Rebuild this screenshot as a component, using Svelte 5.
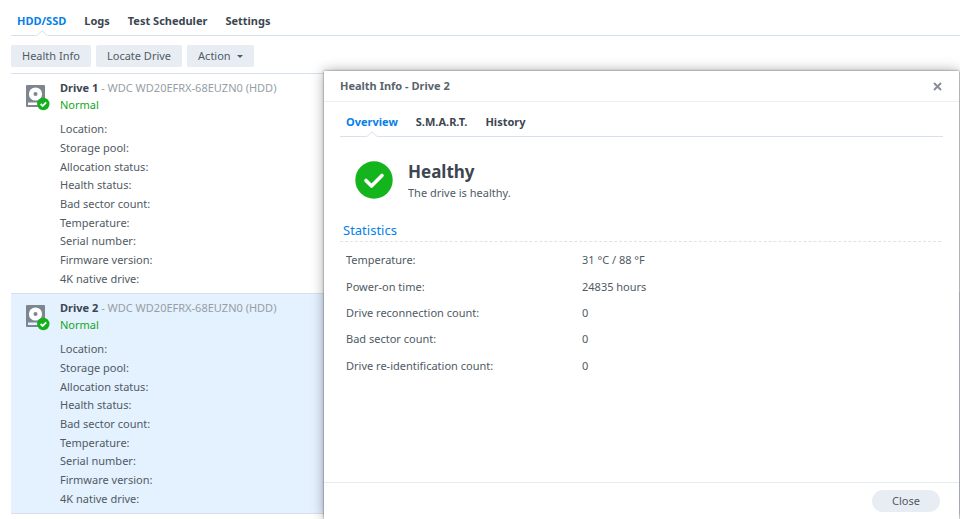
<script>
  let drives = [
    { id: 1, model: 'WDC WD20EFRX-68EUZN0 (HDD)', status: 'Normal' },
    { id: 2, model: 'WDC WD20EFRX-68EUZN0 (HDD)', status: 'Normal' }
  ];
  let fields = [
    'Location', 'Storage pool', 'Allocation status', 'Health status', 'Bad sector count',
    'Temperature', 'Serial number', 'Firmware version', '4K native drive'
  ];
  let tabs = ['HDD/SSD', 'Logs', 'Test Scheduler', 'Settings'];
  let dialogTabs = ['Overview', 'S.M.A.R.T.', 'History'];
  let stats = [
    ['Temperature', '31 °C / 88 °F'],
    ['Power-on time', '24835 hours'],
    ['Drive reconnection count', '0'],
    ['Bad sector count', '0'],
    ['Drive re-identification count', '0']
  ];
  let tab = $state('HDD/SSD');
  let dialogTab = $state('Overview');
  let selected = $state(2);
  let open = $state(true);
</script>

{#snippet tabBar(items, current, pick)}
  <nav class="tabs">
    {#each items as item}
      <button class="tab" class:active={item === current} onclick={() => pick(item)}>
        {item}
        {#if item === current}
          <svg class="notch" width="12" height="6" viewBox="0 0 12 6">
            <path d="M0 6V5.5L1 5.5L6 .8L11 5.5H12V6Z" fill="#fff" />
            <path d="M1 5.5L6 .8L11 5.5" fill="none" stroke="#d7e1eb" />
          </svg>
        {/if}
      </button>
    {/each}
  </nav>
{/snippet}

<main class="page">
  {@render tabBar(tabs, tab, (t) => (tab = t))}

  <div class="toolbar">
    <button class="btn" onclick={() => (open = true)}>Health Info</button>
    <button class="btn">Locate Drive</button>
    <button class="btn">
      Action
      <svg width="6" height="3" viewBox="0 0 6 3"><path d="M0 0H6L3 3Z" fill="#505a64" /></svg>
    </button>
  </div>

  <ul class="drives">
    {#each drives as drive}
      <li class="drive" class:selected={drive.id === selected}>
        <svg class="drive-icon" width="25" height="26" viewBox="0 0 25 26">
          <path
            fill="#7d868f"
            fill-rule="evenodd"
            d="M1 0H18Q19 0 19 1V21Q19 22 18 22H1Q0 22 0 21V1Q0 0 1 0ZM2 17.5V20H17V17.5Z"
          />
          <circle cx="9.5" cy="9" r="6.6" fill="#fff" />
          <circle cx="9.5" cy="9" r="2" fill="#7d868f" />
          <circle cx="17.3" cy="19" r="6.2" fill="#12b01a" />
          <path d="M14.6 19L16.6 21L20.2 17.3" fill="none" stroke="#fff" stroke-width="1.8" />
        </svg>
        <div class="info">
          <div class="name"><strong>Drive {drive.id}</strong> - {drive.model}</div>
          <div class="status">{drive.status}</div>
          <div class="fields">
            {#each fields as field}
              <span>{field}:</span>
            {/each}
          </div>
        </div>
      </li>
    {/each}
  </ul>

  {#if open}
    <section class="dialog" role="dialog" aria-labelledby="dialog-title">
      <header>
        <h1 id="dialog-title">Health Info - Drive {selected}</h1>
        <button class="x" aria-label="Close window" onclick={() => (open = false)}>
          <svg width="9" height="9" viewBox="0 0 9 9">
            <path d="M1 1L8 8M8 1L1 8" fill="none" stroke="#878f97" stroke-width="2" />
          </svg>
        </button>
      </header>

      <div class="content">
        {@render tabBar(dialogTabs, dialogTab, (t) => (dialogTab = t))}

        <div class="health">
          <svg width="38" height="38" viewBox="0 0 38 38">
            <circle cx="19" cy="19" r="18.7" fill="#14b41c" />
            <path
              d="M11 19.5L16.5 25L27 14.5"
              fill="none"
              stroke="#fff"
              stroke-width="3.6"
              stroke-linecap="round"
              stroke-linejoin="round"
            />
          </svg>
          <div>
            <h2>Healthy</h2>
            <p>The drive is healthy.</p>
          </div>
        </div>

        <h3>Statistics</h3>
        <table>
          <tbody>
            {#each stats as [label, value]}
              <tr>
                <th scope="row">{label}:</th>
                <td>{value}</td>
              </tr>
            {/each}
          </tbody>
        </table>
      </div>

      <footer>
        <button class="close" onclick={() => (open = false)}>Close</button>
      </footer>
    </section>
  {/if}
</main>

<style>
  .page {
    position: relative;
    box-sizing: border-box;
    height: 100vh;
    overflow: hidden;
    padding: 5px 0 0 11px;
    background: #fff;
    color: #505a64;
    font: 11px/16px Verdana, "Noto Sans", sans-serif;
  }

  button {
    font: inherit;
    color: inherit;
    border: none;
    cursor: pointer;
  }

  .tabs {
    display: flex;
    gap: 18px;
    height: 30px;
    padding: 0 6px;
    border-bottom: 1px solid #d7e1eb;
  }

  .tab {
    position: relative;
    padding: 1px 0 0;
    background: none;
    color: #3c4650;
    font-weight: bold;
  }

  .tab.active {
    color: #057feb;
  }

  .notch {
    position: absolute;
    left: calc(50% - 6px);
    bottom: -1px;
  }

  .toolbar {
    display: flex;
    gap: 5px;
    padding: 9px 0 6px;
  }

  .btn {
    display: flex;
    align-items: center;
    gap: 6px;
    height: 22px;
    padding: 0 11px;
    border-radius: 2px;
    background: #e8edf4;
  }

  .drives {
    margin: 0;
    padding: 0;
    list-style: none;
    border-top: 1px solid #d7e1eb;
  }

  .drive {
    display: flex;
    gap: 9px;
    padding: 5px 15px;
    border-bottom: 1px solid #d7e1eb;
  }

  .drive.selected {
    background: #e4f1ff;
  }

  .drive-icon {
    margin-top: 6px;
  }

  .name {
    color: #969ea6;
    line-height: 17px;
  }

  .name strong {
    color: #3c4650;
  }

  .status {
    color: #12a61a;
    line-height: 17px;
  }

  .fields {
    display: grid;
    grid-template-rows: repeat(9, 1fr);
    align-items: center;
    height: 168px;
    margin-top: 7px;
  }

  .dialog {
    position: absolute;
    top: 71px;
    right: 1px;
    bottom: 0;
    left: 324px;
    display: flex;
    flex-direction: column;
    background: #fff;
    box-shadow: 0 0 2px rgba(0, 0, 0, 0.5), 0 0 12px rgba(0, 0, 0, 0.35);
  }

  header {
    display: flex;
    align-items: center;
    justify-content: space-between;
    height: 30px;
    padding: 0 16px;
    border-bottom: 1px solid #ebeff2;
  }

  h1 {
    margin: 0;
    font-size: 11px;
    color: #5a646e;
  }

  .x {
    display: flex;
    padding: 1px;
    background: none;
  }

  .content {
    flex: 1;
    padding: 4px 16px 0;
  }

  .health {
    display: flex;
    align-items: center;
    gap: 15px;
    padding: 22px 15px 0;
  }

  h2 {
    margin: 2px 0 0;
    font-size: 17px;
    line-height: 22px;
    color: #3c4650;
  }

  p {
    margin: 2px 0 0;
  }

  h3 {
    margin: 21px 2px 0 0;
    padding: 0 3px 3px;
    border-bottom: 1px dashed #dce3ea;
    color: #057feb;
    font-size: 13px;
    font-weight: normal;
  }

  table {
    width: 100%;
    height: 132px;
    margin-top: 5px;
    border-spacing: 0;
    table-layout: fixed;
  }

  th,
  td {
    padding: 0 6px;
    text-align: left;
    font-weight: normal;
  }

  th {
    width: 224px;
  }

  footer {
    display: flex;
    justify-content: flex-end;
    padding: 7px 19px 7px 0;
    border-top: 1px solid #e4ecf2;
  }

  .close {
    height: 22px;
    padding: 0 20px;
    border-radius: 11px;
    background: #e8edf4;
  }
</style>
